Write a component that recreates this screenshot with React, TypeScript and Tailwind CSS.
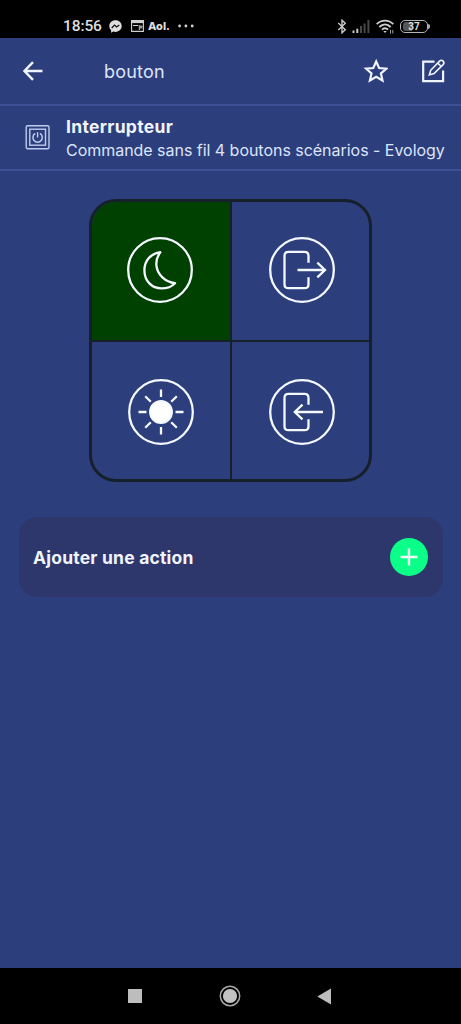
import type { ReactNode } from 'react';

function StatusBar() {
  return (
    <header className="flex h-[38px] shrink-0 items-end justify-between bg-black pr-[31px] pb-[3px] pl-[63px] text-[#dedede]">
      <div className="flex h-[18px] items-center">
        <span className="w-[46px] font-['Roboto'] text-[15.5px] leading-[18px] font-medium tracking-[-0.1px] whitespace-nowrap">18:56</span>
        <svg className="h-[13px] w-[13px]" viewBox="0 0 13 13">
          <path d="M6.5.3C2.8.3.3 2.8.3 6.1c0 1.8.7 3.2 1.8 4.2v2.4l2.2-1.1c.7.2 1.4.3 2.2.3 3.7 0 6.2-2.6 6.2-5.8S10.2.3 6.5.3z" fill="#dedede" />
          <path d="m2.7 8 2.8-2.9L7.6 7l2.7-2" fill="none" stroke="#111" strokeWidth="1.3" />
        </svg>
        <svg className="ml-[9px] h-[12px] w-[13px]" viewBox="0 0 13 12" fill="none" stroke="#cfcfcf">
          <path d="M.6.6h11.8v10.8H.6z" strokeWidth="1.1" />
          <path d="M0 1.9h13" strokeWidth="2.4" />
          <path d="M2 5.5h5M8.3 5v5" strokeWidth="1" />
          <path d="M9 7h2.5" strokeWidth="3" stroke="#999" />
        </svg>
        <span className="ml-[4px] w-[30px] font-['Inter'] text-[11px] leading-[18px] font-extrabold whitespace-nowrap">Aol.</span>
        <svg className="h-[4px] w-[16px]" viewBox="0 0 16 4" fill="#d0d0d0">
          <circle cx="1.6" cy="2" r="1.4" /><circle cx="7.9" cy="2" r="1.4" /><circle cx="14.2" cy="2" r="1.4" />
        </svg>
      </div>
      <div className="flex h-[18px] items-center">
        <svg className="h-[15px] w-[10px]" viewBox="0 0 10 15" fill="none" stroke="#c8c8c8" strokeWidth="1.4">
          <path d="m1.3 4 7 6.7L5 13.8V1.2l3.3 3.1-7 6.7" />
        </svg>
        <svg className="ml-[5px] h-[13px] w-[18px]" viewBox="0 0 18 13" strokeWidth="2">
          <path d="M1.5 10.5V13M5.3 8.7V13" stroke="#c8c8c8" />
          <path d="M9 6.1V13M12.6 3.4V13M16.4 0v13" stroke="#494949" />
        </svg>
        <svg className="ml-[6px] h-[15px] w-[18px]" viewBox="0 0 18 15" fill="none" stroke="#cfcfcf" strokeWidth="1.9">
          <path d="M.7 5.2C5.5.4 12.5.4 17.3 5.2M3.3 8c3.5-3.5 7.9-3.5 11.4 0M5.9 10.6c2-1.9 4.2-1.9 6.2 0" />
          <path d="m7.3 12.1 1.7 1.8 1.7-1.8z" fill="#cfcfcf" stroke="none" />
          <path d="M14.5 11v3.5M16.8 11v3.5" strokeWidth=".8" />
        </svg>
        <div className="ml-[6px] flex h-[13px] w-[28px] items-center justify-center rounded-[5px] border-[1.5px] border-[#b5b5b5]">
          <div className="flex h-[9px] w-[22px] items-center justify-center rounded-[3px] bg-gradient-to-r from-[#555] from-40% to-black to-40% font-['Roboto'] text-[10px] leading-[9px] font-bold">37</div>
        </div>
        <div className="h-[5px] w-[2px] rounded-r bg-[#aaa]" />
      </div>
    </header>
  );
}

function SceneIcon({ children }: { children: ReactNode }) {
  return (
    <svg className="h-[68px] w-[68px] shrink-0" viewBox="-34 -34 68 68" fill="none" stroke="#f4f8ff" strokeWidth="2.3" strokeLinecap="round" strokeLinejoin="round">
      <circle r="31.8" />
      {children}
    </svg>
  );
}

export default function App() {
  return (
    <main className="flex h-[1024px] w-[461px] flex-col overflow-hidden bg-[#2d3e7c] font-['Inter','Noto_Sans',sans-serif] text-[#f0f4ff]">
      <StatusBar />
      <nav className="flex h-[68px] shrink-0 items-center border-b-2 border-[#3e5095] pl-[23px]">
        <svg className="h-[20px] w-[20px]" viewBox="0 0 20 20" fill="none" stroke="currentColor" strokeWidth="2.4">
          <path d="M19.5 10H2M10 1.2 1.5 10l8.5 8.8" />
        </svg>
        <h1 className="ml-[61px] w-[258px] pt-[2px] text-[18px] leading-[24px] font-normal tracking-[0.2px] text-[#dce5fc]">bouton</h1>
        <svg className="h-[26px] w-[26px]" viewBox="0 0 26 26" fill="none" stroke="currentColor" strokeWidth="2.2">
          <path d="m14.2 3.5 2.9 6.5 7.2.7-5.4 4.8 1.6 7-6.3-3.7-6.3 3.7 1.6-7-5.4-4.8 7.2-.7z" />
        </svg>
        <svg className="ml-[32px] h-[26px] w-[26px]" viewBox="0 0 26 26" fill="none" stroke="currentColor" strokeWidth="2.2">
          <path d="M14.5 3.7H3.2v19.4h19.9V12.5" />
          <path d="m9.3 16.9 1.4-4.6 8.9-9.2c1.2-1.2 2.5-1 3.5 0s1.1 2.3 0 3.5l-9.1 9zM17.7 5l3.5 3.5" strokeWidth="1.6" />
        </svg>
      </nav>
      <section className="flex h-[65px] shrink-0 items-center border-b-2 border-[#3e5095] pl-[25px]">
        <svg className="mb-px h-[26px] w-[26px]" viewBox="0 0 26 26" fill="none" stroke="#bdcbed" strokeWidth="1.4">
          <rect x="1.2" y="1.7" width="22.8" height="23" rx="1.5" />
          <rect x="4.8" y="5.2" width="15.7" height="16" />
          <path d="M10.2 9.4a4.7 4.7 0 1 0 4.8 0M12.6 8.2v5.2" strokeWidth="1.5" />
        </svg>
        <div className="ml-[15px] pt-px whitespace-nowrap">
          <h2 className="text-[17.5px] leading-[24px] font-bold tracking-[0.3px]">Interrupteur</h2>
          <p className="text-[16px] leading-[22px] tracking-[-0.03px] text-[#dce5fc]">Commande sans fil 4 boutons scénarios - Evology</p>
        </div>
      </section>
      <section className="mt-[28px] ml-[89px] grid h-[283px] w-[283px] shrink-0 grid-cols-[140px_1fr] grid-rows-[140px_1fr] overflow-hidden rounded-[27px] border-3 border-[#15202b]">
        <div className="flex items-center justify-center border-r-2 border-b-2 border-[#15202b] bg-[#004000] pr-[2px] pb-[2px]">
          <SceneIcon><path d="M.3-17.8C-9.6-16.4-15.6-9-15.6.2c0 11 7.6 18.2 17 18.2 5.6 0 10.4-1.8 13.6-5.2C5.4 12-2.8 4.8-3.6-4.6c-.4-5 1-9.3 3.9-13.2z" /></SceneIcon>
        </div>
        <div className="flex items-center justify-center border-b-2 border-[#15202b] pb-[2px] pl-[3px]">
          <SceneIcon><path d="M6.5-7.3v-6.8q0-4-4-4h-16q-4 0-4 4v28.3q0 4 4 4h16q4 0 4-4V7.3M-4.5 0H22M15.3-7.3 23 0l-7.7 7.3" strokeLinecap="butt" strokeLinejoin="miter" /></SceneIcon>
        </div>
        <div className="flex items-center justify-center border-r-2 border-[#15202b] pt-[2px]">
          <SceneIcon>
            <circle r="10.8" fill="#fff" />
            <path d="M0-22.5v7.5M0 15v7.5M-22.5 0h8M14.5 0h8M-15.8-15.8l5.6 5.6M10.2 10.2l5.6 5.6M-15.8 15.8l5.6-5.6M10.2-10.2l5.6-5.6" strokeLinecap="butt" />
          </SceneIcon>
        </div>
        <div className="flex items-center justify-center pt-[2px] pl-[3px]">
          <SceneIcon><path d="M6.5-7.3v-6.8q0-4-4-4h-16q-4 0-4 4v28.3q0 4 4 4h16q4 0 4-4V7.3M21 0H-6.5M.5-7.3-7.2 0 .5 7.3" strokeLinecap="butt" strokeLinejoin="miter" /></SceneIcon>
        </div>
      </section>
      <section className="mt-[35px] ml-[19px] flex h-[80px] w-[424px] shrink-0 items-center justify-between rounded-[18px] bg-[#2d376b] pr-[15px] pl-[14px]">
        <span className="pt-[2px] text-[17.5px] leading-[24px] font-bold tracking-[0.2px]">Ajouter une action</span>
        <button aria-label="Ajouter" className="flex h-[38px] w-[38px] items-center justify-center rounded-full bg-[#0bff88]">
          <svg className="h-[18px] w-[18px]" viewBox="0 0 18 18" stroke="#effff5" strokeWidth="2.4"><path d="M9 .5v17M.5 9h17" /></svg>
        </button>
      </section>
      <footer className="mt-auto flex h-[56px] shrink-0 items-center bg-black pl-[128px]">
        <div className="h-[14px] w-[14px] bg-[#bdbdbd]" />
        <svg className="ml-[77px] h-[22px] w-[22px]" viewBox="0 0 22 22"><circle cx="11" cy="11" r="9.7" fill="none" stroke="#aaa" strokeWidth="1.5" /><circle cx="11" cy="11" r="7.1" fill="#c2c2c2" /></svg>
        <svg className="ml-[76px] h-[17px] w-[14px]" viewBox="0 0 14 17"><path d="M14 .5v16L.3 8.5z" fill="#bdbdbd" /></svg>
      </footer>
    </main>
  );
}
